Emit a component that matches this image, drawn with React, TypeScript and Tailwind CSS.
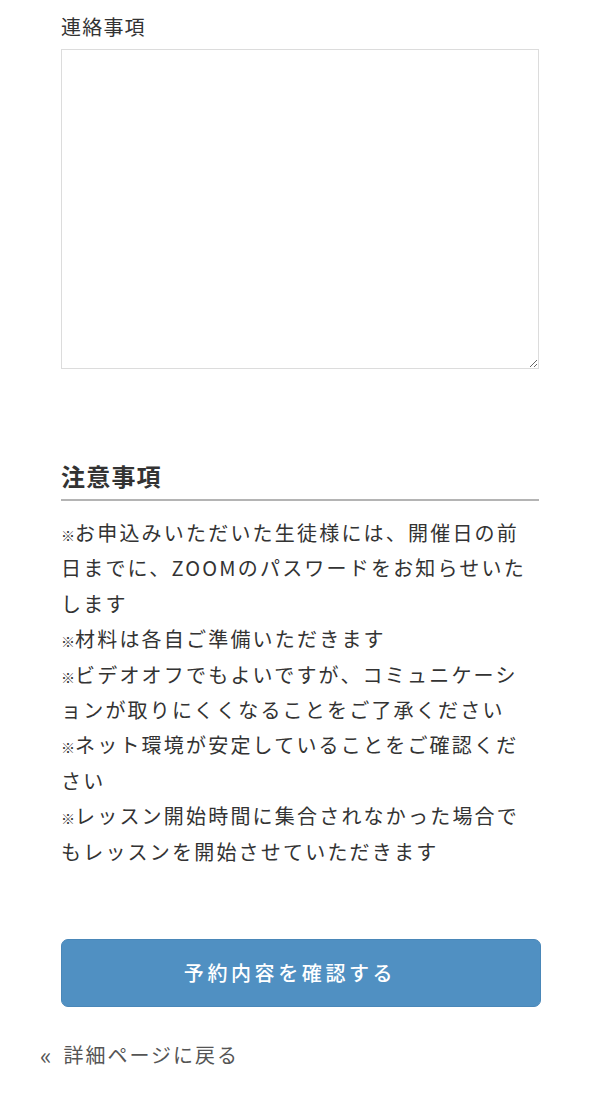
import React from 'react';

const notes = [
  'お申込みいただいた生徒様には、開催日の前日までに、ZOOMのパスワードをお知らせいたします',
  '材料は各自ご準備いただきます',
  'ビデオオフでもよいですが、コミュニケーションが取りにくくなることをご了承ください',
  'ネット環境が安定していることをご確認ください',
  'レッスン開始時間に集合されなかった場合でもレッスンを開始させていただきます',
];

const App: React.FC = () => {
  return (
    <div
      className="w-[600px] h-[1100px] bg-white text-[#333]"
      style={{ fontFamily: '"Noto Sans CJK JP", "Noto Sans", sans-serif' }}>
      <div className="px-[61px] pt-[12px]">
        <label className="block text-[20px] leading-[30px] tracking-[0.06em] text-[#333]">連絡事項</label>
        <textarea className="block mt-[7px] w-[478px] h-[320px] border border-[#dcdcdc] bg-white resize-y outline-none" />

        <h2 className="mt-[90px] pb-[6px] text-[24px] leading-[34px] font-bold tracking-[0.05em] text-[#333] border-b-2 border-[#b4b4b4]">
          注意事項
        </h2>
        <div className="mt-[14px] text-[20px] leading-[35.4px] tracking-[0.11em] text-[#333]">
          {notes.map((n) => (
            <p key={n}>
              <span className="inline-block w-[14px] text-[14px] leading-none tracking-normal">※</span>
              <span>{n}</span>
            </p>
          ))}
        </div>

        <button className="mt-[70px] flex items-center justify-center w-[480px] h-[68px] pr-[22px] rounded-[7px] bg-[#5090c2] border border-[#4a87b8] text-white text-[20px] tracking-[0.18em] font-medium">
          予約内容を確認する
        </button>
      </div>
      <a className="flex items-center gap-[12px] mt-[33px] ml-[40px] text-[20px] tracking-[0.1em] text-[#555] leading-[30px]">
        <span className="text-[24px] leading-none tracking-normal">«</span>
        <span>詳細ページに戻る</span>
      </a>
    </div>
  );
};

export default App;
